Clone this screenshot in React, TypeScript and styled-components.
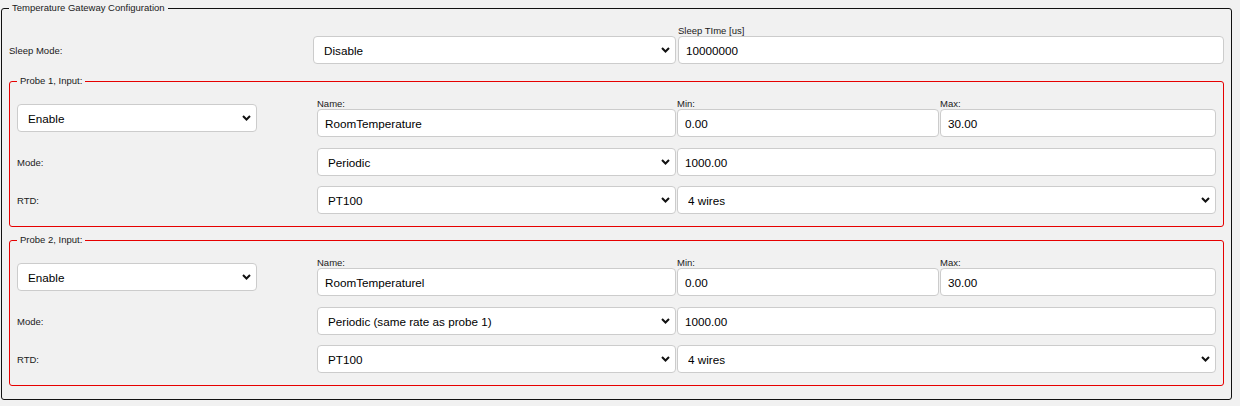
import React from "react";
import styled, { createGlobalStyle, css } from "styled-components";

const GlobalStyle = createGlobalStyle`
  html, body {
    margin: 0;
    padding: 0;
    background: #f1f1f1;
    font-family: "Liberation Sans", Arial, sans-serif;
  }
  * { box-sizing: border-box; }
`;

const Page = styled.div`
  padding: 3px 8px 6px 1px;
`;

const Fieldset = styled.fieldset<{ $variant: "outer" | "probe" }>`
  margin: 0;
  min-width: 0;
  border-radius: 3px;
  ${(p) =>
    p.$variant === "outer"
      ? css`
          border: 1px solid #111;
          padding: 12px 7px 13px 7px;
        `
      : css`
          border: 1px solid #e60000;
          padding: 12px 7px 12px 7px;
        `}
`;

const Legend = styled.legend`
  padding: 0 3px;
  font-size: 9.5px;
  line-height: 10px;
  color: #1a1a1a;
`;

const SleepGrid = styled.div`
  display: grid;
  grid-template-columns: 302fr 363fr 546fr;
  column-gap: 2px;
  align-items: end;
  margin-bottom: 12px;
`;

const ProbeStack = styled.div`
  display: flex;
  flex-direction: column;
  gap: 8px;
`;

const ProbeGrid = styled.div`
  display: grid;
  grid-template-columns: 299fr 359fr 262fr 276fr;
  grid-template-rows: 40px 28px 28px;
  column-gap: 1px;
  row-gap: 10px;
`;

const RowLabel = styled.div`
  height: 28px;
  display: flex;
  align-items: center;
  font-size: 9.5px;
  color: #1a1a1a;
  align-self: end;
`;

const Field = styled.div<{ $span?: boolean }>`
  display: flex;
  flex-direction: column;
  align-self: start;
  min-width: 0;
  ${(p) => p.$span && css`grid-column: 3 / 5;`}
`;

const FieldLabel = styled.label`
  height: 11px;
  line-height: 11px;
  font-size: 9.5px;
  color: #1a1a1a;
  white-space: nowrap;
`;

const controlBase = css`
  height: 28px;
  width: 100%;
  margin: 0;
  border: 1px solid #cccccc;
  border-radius: 4px;
  background: #ffffff;
  font-family: "Liberation Sans", Arial, sans-serif;
  font-size: 11.7px;
  color: #000;
  outline: none;
`;

const Input = styled.input`
  ${controlBase};
  padding: 0 7px;
`;

const SelectWrap = styled.div<{ $w?: number; $center?: boolean; $span?: boolean }>`
  position: relative;
  width: ${(p) => (p.$w ? `${p.$w}px` : "100%")};
  min-width: 0;
  ${(p) => p.$center && css`align-self: center;`}
  ${(p) => p.$span && css`grid-column: 3 / 5;`}
`;

const Select = styled.select`
  ${controlBase};
  appearance: none;
  -webkit-appearance: none;
  padding: 0 24px 0 10px;
`;

const Chevron = styled.svg`
  position: absolute;
  right: 6px;
  top: 50%;
  margin-top: -3px;
  width: 9px;
  height: 6px;
  pointer-events: none;
`;

type SelProps = {
  value: string;
  options: string[];
  w?: number;
  center?: boolean;
  span?: boolean;
};

function DropDown({ value, options, w, center, span }: SelProps) {
  return (
    <SelectWrap $w={w} $center={center} $span={span}>
      <Select defaultValue={value}>
        {options.map((o) => (
          <option key={o} value={o}>
            {o}
          </option>
        ))}
      </Select>
      <Chevron viewBox="0 0 9 6">
        <path d="M1 1 L4.5 4.5 L8 1" fill="none" stroke="#111" strokeWidth="2" />
      </Chevron>
    </SelectWrap>
  );
}

type ProbeProps = { index: number; name: string; modeValue: string };

function Probe({ index, name, modeValue }: ProbeProps) {
  return (
    <Fieldset $variant="probe">
      <Legend>Probe {index}, Input:</Legend>
      <ProbeGrid>
        <DropDown value="Enable" options={["Enable", "Disable"]} w={240} center />
        <Field>
          <FieldLabel>Name:</FieldLabel>
          <Input defaultValue={name} />
        </Field>
        <Field>
          <FieldLabel>Min:</FieldLabel>
          <Input defaultValue="0.00" />
        </Field>
        <Field>
          <FieldLabel>Max:</FieldLabel>
          <Input defaultValue="30.00" />
        </Field>

        <RowLabel>Mode:</RowLabel>
        <DropDown
          value={modeValue}
          options={["Periodic", "Periodic (same rate as probe 1)", "On change"]}
        />
        <Field $span>
          <Input defaultValue="1000.00" />
        </Field>

        <RowLabel>RTD:</RowLabel>
        <DropDown value="PT100" options={["PT100", "PT1000"]} />
        <DropDown value="4 wires" options={["2 wires", "3 wires", "4 wires"]} span />
      </ProbeGrid>
    </Fieldset>
  );
}

export default function App() {
  return (
    <>
      <GlobalStyle />
      <Page>
        <Fieldset $variant="outer">
          <Legend>Temperature Gateway Configuration</Legend>
          <SleepGrid>
            <RowLabel>Sleep Mode:</RowLabel>
            <DropDown value="Disable" options={["Disable", "Enable"]} />
            <Field>
              <FieldLabel>Sleep TIme [us]</FieldLabel>
              <Input defaultValue="10000000" />
            </Field>
          </SleepGrid>
          <ProbeStack>
            <Probe index={1} name="RoomTemperature" modeValue="Periodic" />
            <Probe
              index={2}
              name="RoomTemperaturel"
              modeValue="Periodic (same rate as probe 1)"
            />
          </ProbeStack>
        </Fieldset>
      </Page>
    </>
  );
}
